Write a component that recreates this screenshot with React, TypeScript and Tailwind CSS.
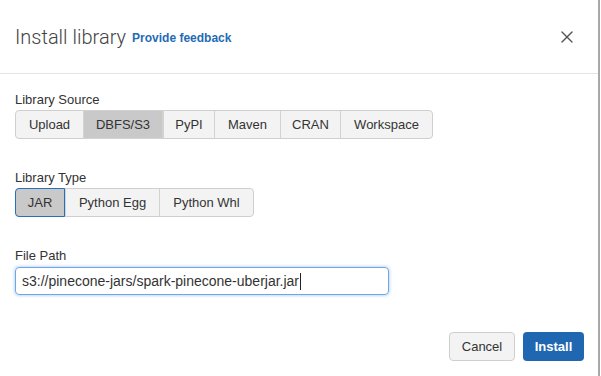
import { X } from 'lucide-react';

const sources: [string, number][] = [
  ['Upload', 67],
  ['DBFS/S3', 80],
  ['PyPI', 51],
  ['Maven', 66],
  ['CRAN', 60],
  ['Workspace', 92],
];
const types: [string, number][] = [
  ['JAR', 50],
  ['Python Egg', 94],
  ['Python Whl', 94],
];

function Segmented({ items, active }: { items: [string, number][]; active: string }) {
  return (
    <div className="flex h-[29px] w-fit rounded-[4px] border border-[#cfcfcf] bg-[#f3f3f3]">
      {items.map(([item, w], i) => {
        const on = item === active;
        return (
          <div
            key={item}
            style={{ width: w }}
            className={
              'flex items-center justify-center text-[13px] text-[#333] ' +
              (i > 0 ? 'border-l border-[#d2d2d2] ' : '') +
              (on ? '-my-px border border-[#2a6fba] bg-[#c9c9c9] ' : '') +
              (on && i === 0 ? '-ml-px ' : '') +
              (i === 0 ? 'rounded-l-[4px] ' : '')
            }
          >
            {item}
          </div>
        );
      })}
    </div>
  );
}

export default function App() {
  return (
    <div className="h-[376px] w-[601px] bg-white" style={{ fontFamily: '"Liberation Sans", Arial, sans-serif' }}>
      <div className="flex h-full w-[600px] flex-col rounded-tl-[4px] border-r-2 border-[#a8a8a8] bg-white">
        <div className="flex h-[74px] shrink-0 items-center border-b border-[#e4e4e4] pl-[15px] pr-[21px]">
          <span className="text-[20px] font-light text-[#444]" style={{ fontFamily: 'Roboto, sans-serif' }}>
            Install library
          </span>
          <a className="ml-[6px] mt-[3px] text-[12px] font-bold text-[#1f6bb5]">Provide feedback</a>
          <X className="ml-auto h-[20px] w-[20px] text-[#555]" strokeWidth={1.6} />
        </div>

        <div className="flex flex-col px-[15px]">
          <div className="mt-[18px] text-[13px] leading-[16px] text-[#333]">Library Source</div>
          <div className="mt-[2px]">
            <Segmented items={sources} active="DBFS/S3" />
          </div>

          <div className="mt-[31px] text-[13px] leading-[16px] text-[#333]">Library Type</div>
          <div className="mt-[2px]">
            <Segmented items={types} active="JAR" />
          </div>

          <div className="mt-[31px] text-[13px] leading-[16px] text-[#333]">File Path</div>
          <div className="mt-[3px] flex h-[28px] w-[374px] items-center rounded-[4px] border border-[#6fa6e3] px-[6px] text-[14px] text-[#333] shadow-[0_0_3px_1px_rgba(80,150,230,0.35)]">
            s3://pinecone-jars/spark-pinecone-uberjar.jar
            <span className="ml-px h-[17px] w-px bg-[#222]" />
          </div>
        </div>

        <div className="mt-auto mb-[15px] flex justify-end gap-[8px] pr-[14px]">
          <button className="h-[29px] w-[66px] rounded-[4px] border border-[#cfcfcf] bg-[#f3f3f3] text-[13px] text-[#333]">
            Cancel
          </button>
          <button className="h-[29px] w-[61px] rounded-[4px] bg-[#1f67b1] text-[13px] font-bold text-white">
            Install
          </button>
        </div>
      </div>
    </div>
  );
}
